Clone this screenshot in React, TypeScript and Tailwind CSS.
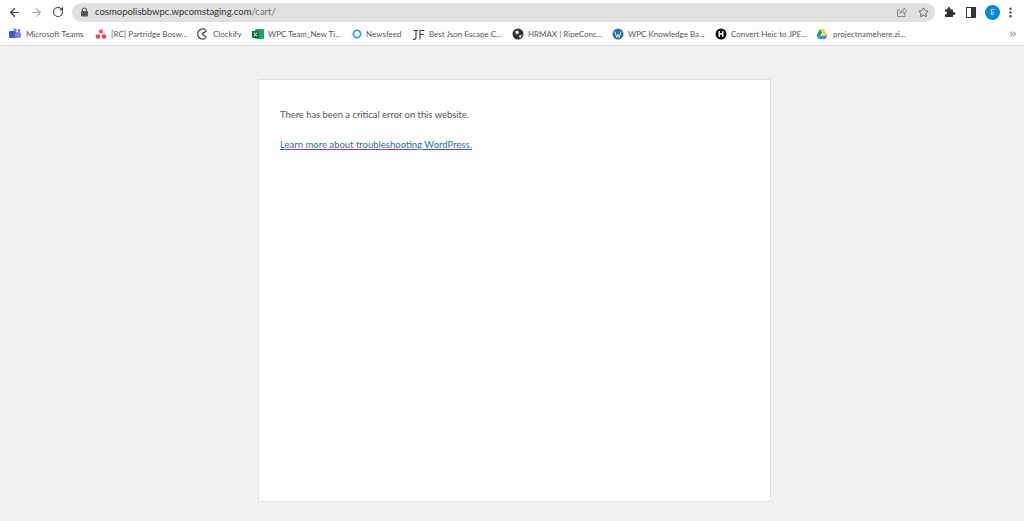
import React from "react";
import { ArrowLeft, ArrowRight, RotateCw, Star, EllipsisVertical, ChevronsRight } from "lucide-react";

const font = "font-['Lato','Noto_Sans',sans-serif]";

function Mark({ children }: { children: React.ReactNode }) {
  return <svg width="12" height="12" viewBox="0 0 12 12" className="shrink-0">{children}</svg>;
}

const bookmarks: { w: string; label: string; icon: React.ReactNode; gap: string }[] = [
  { w: "w-[85px]", label: "Microsoft Teams", gap: "gap-[5px]", icon: <Mark><rect x="0" y="3" width="7" height="7" rx="1" fill="#4b53bc" /><rect x="6" y="4" width="6" height="6" rx="2" fill="#7b83eb" /><circle cx="6" cy="2" r="1.7" fill="#7b83eb" /><circle cx="10" cy="2.5" r="1.2" fill="#5059c9" /></Mark> },
  { w: "w-[101px]", label: "[RC] Partridge Bosw...", gap: "gap-[4px]", icon: <Mark><circle cx="6" cy="3.5" r="2.3" fill="#f0616d" /><circle cx="3" cy="8.5" r="2.3" fill="#e5414f" /><circle cx="9" cy="8.5" r="2.3" fill="#e5414f" /></Mark> },
  { w: "w-[54px]", label: "Clockify", gap: "gap-[4px]", icon: <Mark><path d="M9 2.2A5 5 0 1 0 9 9.8" fill="none" stroke="#555" strokeWidth="1.5" /><path d="M5 6 9.5 3M5.5 6.5 9.5 9" stroke="#333" strokeWidth="1.2" /></Mark> },
  { w: "w-[98px]", label: "WPC Team_New Ti...", gap: "gap-[4px]", icon: <Mark><rect x="3" y="1" width="9" height="10" rx="1" fill="#21a366" /><rect x="0" y="3" width="7" height="7" fill="#0f6b3a" /><path d="M1.8 4.5 5 8.5M5 4.5 1.8 8.5" stroke="#fff" strokeWidth="1" /></Mark> },
  { w: "w-[60px]", label: "Newsfeed", gap: "gap-[3px]", icon: <Mark><circle cx="6" cy="6" r="3.6" fill="none" stroke="#35a0dd" strokeWidth="1.8" /></Mark> },
  { w: "w-[99px]", label: "Best Json Escape C...", gap: "gap-[4px]", icon: <svg width="13" height="13" viewBox="0 0 13 13" className="shrink-0"><path d="M4 2.5V9.5Q4 11.5 1 11.5M1.5 2.5H6M8 11.5V2.5H12.500M8 6.500H11.500" fill="none" stroke="#333" strokeWidth="1.100" /></svg> },
  { w: "w-[99px]", label: "HRMAX | RipeConc...", gap: "gap-[4px]", icon: <Mark><circle cx="6" cy="6" r="5.500" fill="#333" /><path d="M3 3.500 6 2.500 7 5 4.500 6.500ZM7 7.500 10 7 8 10.500Z" fill="#fff" /></Mark> },
  { w: "w-[102px]", label: "WPC Knowledge Ba...", gap: "gap-[4px]", icon: <Mark><circle cx="6" cy="6" r="5.500" fill="#21759b" /><path d="M2.800 3.500 4.800 9.500 6 6.500 7.200 9.500 9.200 3.500" fill="none" stroke="#fff" strokeWidth="0.900" /></Mark> },
  { w: "w-[100px]", label: "Convert Heic to JPE...", gap: "gap-[4px]", icon: <Mark><circle cx="6" cy="6" r="5.500" fill="#111" /><path d="M4.200 3V9M7.800 3V9M4.200 6H7.800" stroke="#fff" strokeWidth="1.300" /></Mark> },
  { w: "w-[90px]", label: "projectnamehere.zi...", gap: "gap-[5px]", icon: <Mark><path d="M4 1H8L5.500 5.500 3.500 9 1.500 9 .5 7.500Z" fill="#1fa463" /><path d="M4 1H8L11.500 7.500H7.500Z" fill="#ffd04b" /><path d="M3 7.500H11.500L9.500 11H1.500Z" fill="#4688f4" /></Mark> },
];

export default function App() {
  return (
    <div className={`flex h-[521px] w-[1024px] flex-col overflow-hidden bg-[#f1f1f1] ${font}`}>
      <header className="flex h-[46px] shrink-0 flex-col border-b border-[#dadada] bg-white">
        <div className="flex h-[23px] items-center pl-[8px] pr-[5px] pt-[1px]">
          <ArrowLeft size={13} strokeWidth={2.300} className="text-[#3c3c3c]" />
          <ArrowRight size={13} strokeWidth={2} className="ml-[9px] text-[#a9a9a9]" />
          <RotateCw size={12} strokeWidth={2.300} className="ml-[9px] text-[#3c3c3c]" />
          <div className="ml-[8px] flex h-[19px] w-[863px] items-center rounded-full bg-[#e0e0e0] pl-[8px] pr-[6px] text-[9.500px]">
            <svg width="9" height="10" viewBox="0 0 9 10" className="shrink-0 text-[#555]" fill="currentColor">
              <rect x="1" y="4" width="7" height="5.500" rx="1" />
              <path d="M2.500 4.500V3a2 2 0 0 1 4 0V4.500" fill="none" stroke="currentColor" strokeWidth="1.100" />
            </svg>
            <span className="ml-[6px] text-[#333]">cosmopolisbbwpc.wpcomstaging.com</span>
            <span className="text-[#6f6f6f]">/cart/</span>
            <svg width="12" height="12" viewBox="0 0 12 12" className="ml-auto text-[#8a8a8a]" fill="none" stroke="currentColor" strokeWidth="1">
              <path d="M9 6.500V10.500H1.500V4H4M4 7.500C4.500 5 6 3.800 8 3.800V2L11 4.800 8 7.500V5.800C6.500 5.800 5 6.200 4 7.500Z" />
            </svg>
            <Star size={11} strokeWidth={1.700} className="ml-[10px] text-[#444]" />
          </div>
          <svg width="12" height="12" viewBox="0 0 12 12" className="ml-[9px] text-[#333]" fill="currentColor">
            <path d="M1 3.500H3.500C3.500 2.500 3.800 1 5 1S6.500 2.500 6.500 3.500H9V6C10 6 11.500 6.200 11.500 7.500S10 9 9 9V11H1V8.500C2 8.500 3 8.200 3 7S2 5.500 1 5.500Z" />
          </svg>
          <div className="ml-[10px] flex h-[11px] w-[10px] justify-end border-[1.500px] border-[#333]">
            <div className="h-full w-[4px] bg-[#333]" />
          </div>
          <div className="ml-[9px] flex h-[15px] w-[15px] items-center justify-center rounded-full bg-[#0288d1] text-[8px] text-white">E</div>
          <EllipsisVertical size={13} strokeWidth={2.500} className="ml-[4px] text-[#444]" />
        </div>
        <nav className="flex h-[22px] items-center pl-[9px] pr-[6px] text-[8px] text-[#555]">
          {bookmarks.map((b) => (
            <div key={b.label} className={`flex shrink-0 items-center ${b.gap} ${b.w} mr-[1px] whitespace-nowrap`}>
              {b.icon}
              <span>{b.label}</span>
            </div>
          ))}
          <ChevronsRight size={10} strokeWidth={2} className="ml-auto text-[#444]" />
        </nav>
      </header>
      <main className="flex flex-1 justify-center pl-[4px] pt-[33px]">
        <section className="h-[423px] w-[513px] border border-[#e1e1e1] bg-white pl-[21.500px] pr-[21px] pt-[27px] text-[9.400px] leading-[16px] text-[#555]">
          <p>There has been a critical error on this website.</p>
          <p className="mt-[14px] text-[9.500px]"><a className="text-[#21759b] underline">Learn more about troubleshooting WordPress.</a></p>
        </section>
      </main>
    </div>
  );
}
